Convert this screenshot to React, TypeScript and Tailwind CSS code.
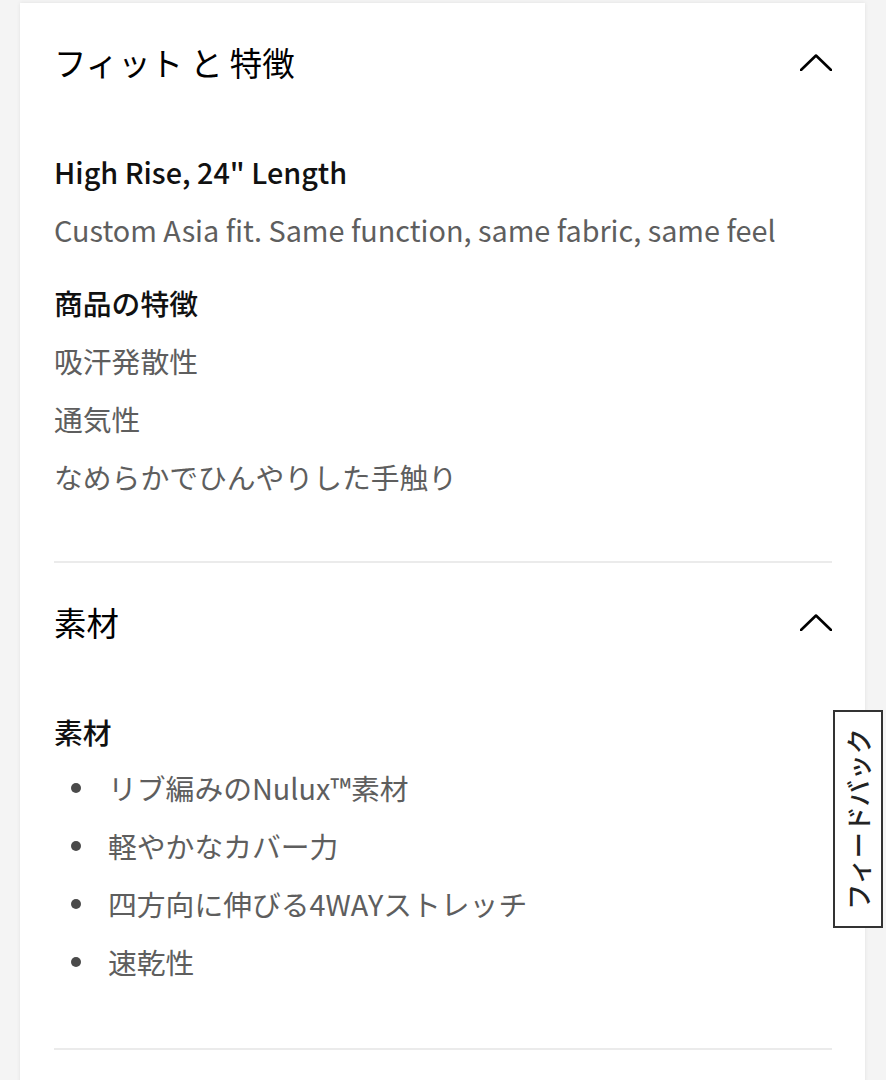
import React from "react";

const fitFeatures = ["吸汗発散性", "通気性", "なめらかでひんやりした手触り"];
const materials = ["リブ編みのNulux™素材", "軽やかなカバー力", "四方向に伸びる4WAYストレッチ", "速乾性"];

function Chevron() {
    return (
        <svg width="32" height="17" viewBox="0 0 32 17" fill="none" aria-hidden="true">
            <polyline points="1,16 16,1.5 31,16" stroke="#000" strokeWidth="2.6" strokeLinecap="round" strokeLinejoin="round" />
        </svg>
    );
}

function SectionHeader({ title }: { title: string }) {
    return (
        <div className="flex h-[122px] items-center justify-between pb-[4px]">
            <h2 className="text-[32.4px] font-normal text-black">{title}</h2>
            <Chevron />
        </div>
    );
}

export default function App() {
    return (
        <div className="min-h-screen bg-[#f4f4f4] pt-[3px] font-['Noto_Sans_CJK_JP',sans-serif]">
            <div className="ml-[20px] w-[845px] bg-white pl-[34px] pr-[33px] shadow-[0_0_4px_rgba(0,0,0,0.08)]">
                {/* フィット と 特徴 */}
                <section className="border-b-2 border-[#ebebeb]">
                    <SectionHeader title="フィット と 特徴" />
                    <div className="pt-[18px] pb-[55px] text-[28.8px] leading-[58px]">
                        <p className="font-medium text-[#111]">High Rise, 24&quot; Length</p>
                        <p className="text-[#5e5e5e]">Custom Asia fit. Same function, same fabric, same feel</p>
                        <p className="mt-[15px] font-medium text-[#111]">商品の特徴</p>
                        {fitFeatures.map((f) => (
                            <p key={f} className="text-[#5e5e5e]">{f}</p>
                        ))}
                    </div>
                </section>

                {/* 素材 */}
                <section className="border-b-2 border-[#ebebeb]">
                    <SectionHeader title="素材" />
                    <div className="pt-[18px] pb-[57px] text-[28.8px] leading-[58px]">
                        <p className="font-medium text-[#111]">素材</p>
                        <ul className="-mt-[2px]">
                            {materials.map((m) => (
                                <li key={m} className="flex items-center text-[#5e5e5e]">
                                    <span className="ml-[17px] mr-[27px] h-[10px] w-[10px] rounded-full bg-[#4a4a4a]" />
                                    {m}
                                </li>
                            ))}
                        </ul>
                    </div>
                </section>
                <div className="h-[60px]" />
            </div>

            {/* feedback tab */}
            <button className="fixed right-[3px] top-[710px] flex h-[218px] w-[50px] items-center justify-center border-2 border-[#333] bg-white">
                <span className="-rotate-90 whitespace-nowrap text-[26px] font-medium leading-none text-[#222]">
                    フィードバック
                </span>
            </button>
        </div>
    );
}
